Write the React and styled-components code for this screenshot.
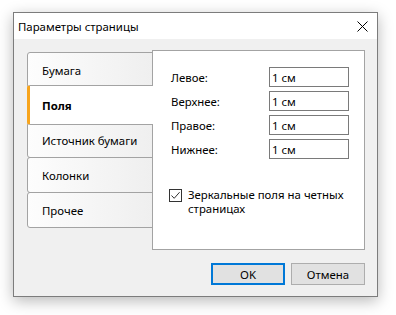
import React from "react";
import styled, { createGlobalStyle } from "styled-components";

const Global = createGlobalStyle`
  html, body { margin: 0; padding: 0; background: #ffffff; }
  body { font-family: "Segoe UI", "Noto Sans", "Open Sans", sans-serif; }
  * { box-sizing: border-box; }
`;

const Page = styled.div`
  width: 396px;
  height: 315px;
  padding: 12px 0 0 13px;
`;

const Window = styled.div`
  width: 365px;
  height: 285px;
  border: 1px solid #7c7c7c;
  background: #f0f0f0;
  box-shadow: 0 4px 14px rgba(0, 0, 0, 0.28);
  display: flex;
  flex-direction: column;
`;

const TitleBar = styled.div`
  height: 26px;
  background: #ffffff;
  display: flex;
  align-items: center;
  justify-content: space-between;
  padding: 0 0 0 4px;
`;

const Title = styled.span`
  font-size: 11.4px;
  color: #000;
`;

const CloseBtn = styled.div`
  width: 30px;
  height: 26px;
  display: flex;
  align-items: center;
  justify-content: center;
`;

const Body = styled.div`
  flex: 1;
  padding: 11px 12px 11px 13px;
  display: flex;
  flex-direction: column;
`;

const TabArea = styled.div`
  display: flex;
  align-items: flex-start;
`;

const TabList = styled.div`
  width: 126px;
  margin-top: 2px;
  margin-right: -1px;
  display: flex;
  flex-direction: column;
  position: relative;
  z-index: 2;
`;

const Tab = styled.div`
  position: relative;
  height: ${(p) => (p.$active ? 40 : 36)}px;
  margin: ${(p) => (p.$active ? "-2px 0 -3px 0" : "0 0 -1px 0")};
  z-index: ${(p) => (p.$active ? 2 : 1)};
  border: 1px solid #a3a3a3;
  border-right: ${(p) => (p.$active ? "none" : "1px solid #a3a3a3")};
  border-left: ${(p) => (p.$active ? "3px solid #f7a41c" : "1px solid #a3a3a3")};
  border-radius: 3px 0 0 3px;
  background: ${(p) =>
    p.$active ? "#ffffff" : "linear-gradient(to right, #fdfdfd, #efefef)"};
  display: flex;
  align-items: center;
  padding-left: ${(p) => (p.$active ? 12 : 14)}px;
  font-size: 11.4px;
  font-weight: ${(p) => (p.$active ? 700 : 400)};
  color: #000;
  white-space: nowrap;
`;

const Panel = styled.div`
  width: 213px;
  height: 200px;
  background: #ffffff;
  border: 1px solid #a3a3a3;
  padding: 16px 15px 0 18px;
  position: relative;
  z-index: 1;
`;

const FieldGrid = styled.div`
  display: grid;
  grid-template-columns: 98px 80px;
  row-gap: 4px;
  align-items: center;
`;

const Label = styled.span`
  font-size: 11.4px;
  color: #000;
`;

const Input = styled.div`
  height: 20px;
  border: 1px solid #7a7a7a;
  background: #fff;
  font-size: 11.4px;
  color: #000;
  padding-left: 2px;
  display: flex;
  align-items: center;
`;

const CheckRow = styled.div`
  display: flex;
  align-items: flex-start;
  margin-top: 30px;
  margin-left: -2px;
`;

const Box = styled.div`
  width: 13px;
  height: 13px;
  border: 1px solid #333333;
  flex: none;
  display: flex;
  align-items: center;
  justify-content: center;
`;

const CheckText = styled.span`
  font-size: 11.4px;
  line-height: 14px;
  color: #000;
  margin-left: 6px;
  margin-top: -1px;
  white-space: nowrap;
`;

const ButtonRow = styled.div`
  display: flex;
  justify-content: flex-end;
  gap: 6px;
  margin-top: 13px;
`;

const Button = styled.div`
  width: 74px;
  height: 22px;
  background: #e1e1e1;
  border: ${(p) => (p.$default ? "2px solid #0078d7" : "1px solid #adadad")};
  display: flex;
  align-items: center;
  justify-content: center;
  font-size: 11.4px;
  color: #000;
`;

export default function App() {
  const tabs = ["Бумага", "Поля", "Источник бумаги", "Колонки", "Прочее"];
  const fields = ["Левое:", "Верхнее:", "Правое:", "Нижнее:"];
  return (
    <Page>
      <Global />
      <Window>
        <TitleBar>
          <Title>Параметры страницы</Title>
          <CloseBtn>
            <svg width="11" height="11" viewBox="0 0 11 11">
              <path d="M0.5 0.5 L10.5 10.5 M10.5 0.5 L0.5 10.5" stroke="#000" strokeWidth="1" fill="none" />
            </svg>
          </CloseBtn>
        </TitleBar>
        <Body>
          <TabArea>
            <TabList>
              {tabs.map((t) => (
                <Tab key={t} $active={t === "Поля"}>
                  {t}
                </Tab>
              ))}
            </TabList>
            <Panel>
              <FieldGrid>
                {fields.map((f) => (
                  <React.Fragment key={f}>
                    <Label>{f}</Label>
                    <Input>1 см</Input>
                  </React.Fragment>
                ))}
              </FieldGrid>
              <CheckRow>
                <Box>
                  <svg width="11" height="11" viewBox="0 0 11 11">
                    <path d="M1.5 5.5 L4.2 8.3 L9.6 2.2" stroke="#333" strokeWidth="1" fill="none" />
                  </svg>
                </Box>
                <CheckText>
                  Зеркальные поля на четных
                  <br />
                  страницах
                </CheckText>
              </CheckRow>
            </Panel>
          </TabArea>
          <ButtonRow>
            <Button $default>OK</Button>
            <Button>Отмена</Button>
          </ButtonRow>
        </Body>
      </Window>
    </Page>
  );
}
